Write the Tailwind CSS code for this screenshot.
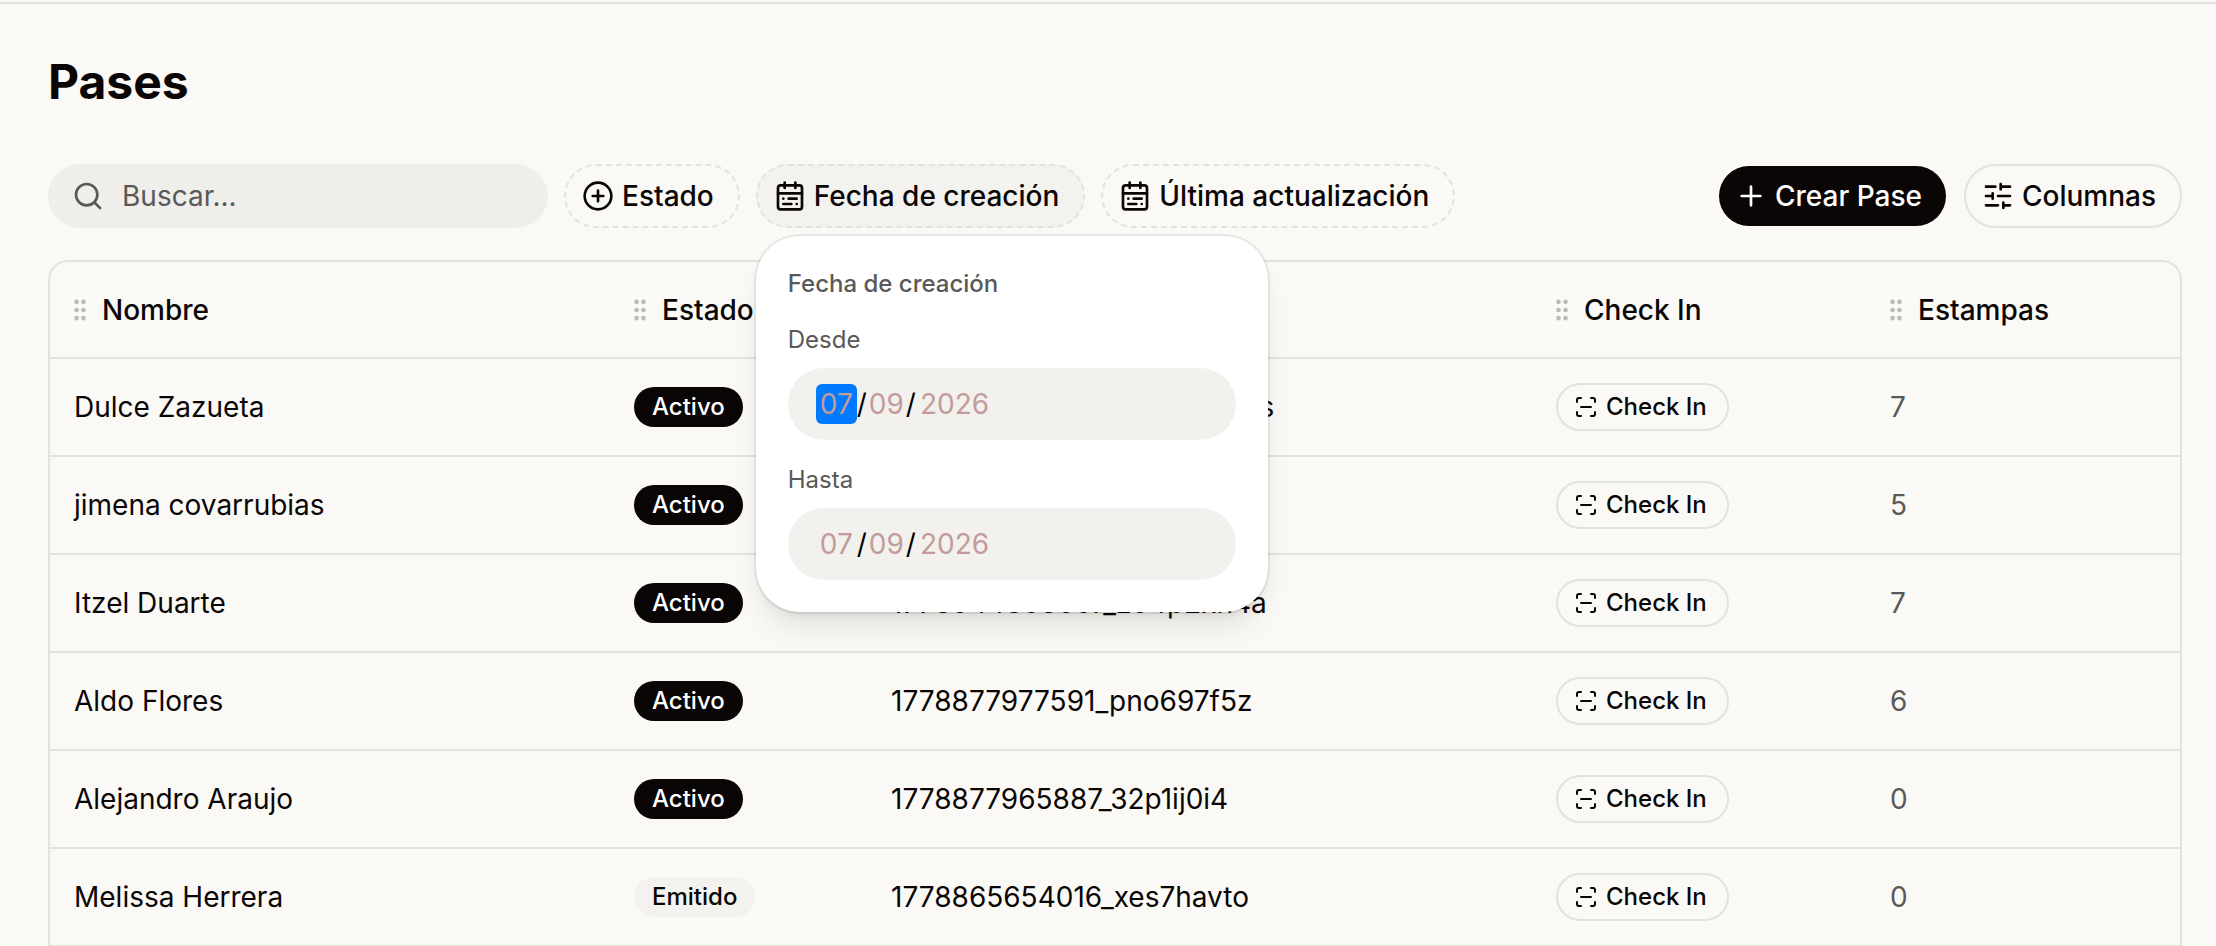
<!DOCTYPE html>
<html lang="en">
<head>
  <meta charset="UTF-8">
  <title>Pases</title>
  <script src="https://cdn.jsdelivr.net/npm/@tailwindcss/browser@4"></script>
</head>
<body class="bg-[#faf9f5] h-screen overflow-hidden font-[Inter,sans-serif] text-[28px] leading-10 text-[#0a0606]">
  <!-- Icons -->
  <svg class="hidden">
    <symbol id="search" viewBox="0 0 24 24"><circle cx="11" cy="11" r="8"/><path d="m21 21-4.3-4.3"/></symbol>
    <symbol id="plus" viewBox="0 0 24 24"><path d="M5 12h14M12 5v14"/></symbol>
    <symbol id="circle-plus" viewBox="0 0 24 24"><circle cx="12" cy="12" r="10"/><path d="M8 12h8M12 8v8"/></symbol>
    <symbol id="calendar" viewBox="0 0 24 24"><rect x="3" y="4" width="18" height="18" rx="2"/><path d="M16 2v4M3 10h18M8 2v4M17 14h-6M13 18H7M7 14h.01M17 18h.01"/></symbol>
    <symbol id="sliders" viewBox="0 0 24 24"><path d="M10 5H3M12 19H3M14 3v4M16 17v4M21 12h-9M21 19h-5M21 5h-7M8 10v4M8 12H3"/></symbol>
    <symbol id="scan" viewBox="0 0 24 24"><path d="M3 7V5a2 2 0 0 1 2-2h2M17 3h2a2 2 0 0 1 2 2v2M21 17v2a2 2 0 0 1-2 2h-2M7 21H5a2 2 0 0 1-2-2v-2M7 12h10"/></symbol>
    <symbol id="grip" viewBox="0 0 24 24"><circle cx="9" cy="5" r="1"/><circle cx="9" cy="12" r="1"/><circle cx="9" cy="19" r="1"/><circle cx="15" cy="5" r="1"/><circle cx="15" cy="12" r="1"/><circle cx="15" cy="19" r="1"/></symbol>
  </svg>

  <div class="h-1 border-b-2 border-[#e3e2de]"></div>

  <main class="pl-12 pr-[34px] pt-[54px]">
    <h1 class="text-5xl leading-12 font-bold">Pases</h1>

    <!-- Toolbar -->
    <div class="mt-[58px] flex items-center gap-4 font-medium">
      <label class="flex h-16 w-[500px] items-center gap-[18px] rounded-full bg-[#efeeea] px-6 text-[#595959]">
        <svg class="size-8 shrink-0 fill-none stroke-current stroke-2" stroke-linecap="round" stroke-linejoin="round"><use href="#search"/></svg>
        <input type="search" aria-label="Buscar" placeholder="Buscar..." class="min-w-0 flex-1 font-normal outline-none placeholder:text-[#595959]">
      </label>
      <button class="flex h-16 items-center gap-2 rounded-full border-2 border-dashed border-[#e3e2de] pl-4 pr-6">
        <svg class="size-8 fill-none stroke-current stroke-2" stroke-linecap="round" stroke-linejoin="round"><use href="#circle-plus"/></svg>
        Estado
      </button>
      <div class="relative">
        <button class="flex h-16 items-center gap-2 rounded-full border-2 border-dashed border-[#e3e2de] bg-[#f3f2ee] pl-4 pr-6">
          <svg class="size-8 fill-none stroke-current stroke-2" stroke-linecap="round" stroke-linejoin="round"><use href="#calendar"/></svg>
          Fecha de creación
        </button>

        <!-- Date filter popover -->
        <div class="absolute left-0 top-full z-10 mt-2 w-[512px] rounded-[44px] bg-white p-8 text-2xl leading-8 text-[#595959] ring-2 ring-black/7 shadow-[0_20px_30px_-6px_rgba(0,0,0,0.1),0_8px_12px_-8px_rgba(0,0,0,0.1)]">
          <p>Fecha de creación</p>
          <label for="desde" class="mt-6 block font-normal">Desde</label>
          <input id="desde" type="date" value="2026-07-09" class="mt-3 block h-18 w-full rounded-full bg-[#f2f1ed] px-7 text-[28px] leading-10 font-normal text-black outline-none [&::-webkit-calendar-picker-indicator]:hidden [&::-webkit-datetime-edit]:leading-10 [&::-webkit-datetime-edit-month-field]:rounded-md [&::-webkit-datetime-edit-month-field]:bg-[#007aff] [&::-webkit-datetime-edit-month-field]:px-1 [&::-webkit-datetime-edit-month-field]:py-[3px] [&::-webkit-datetime-edit-month-field]:text-[#c29b9b] [&::-webkit-datetime-edit-day-field]:px-0.5 [&::-webkit-datetime-edit-day-field]:text-[#c29b9b] [&::-webkit-datetime-edit-year-field]:px-1 [&::-webkit-datetime-edit-year-field]:text-[#c29b9b]">
          <label for="hasta" class="mt-6 block font-normal">Hasta</label>
          <input id="hasta" type="date" value="2026-07-09" class="mt-3 block h-18 w-full rounded-full bg-[#f2f1ed] px-7 text-[28px] leading-10 font-normal text-black outline-none [&::-webkit-calendar-picker-indicator]:hidden [&::-webkit-datetime-edit]:leading-10 [&::-webkit-datetime-edit-month-field]:px-1 [&::-webkit-datetime-edit-month-field]:py-[3px] [&::-webkit-datetime-edit-month-field]:text-[#c29b9b] [&::-webkit-datetime-edit-day-field]:px-0.5 [&::-webkit-datetime-edit-day-field]:text-[#c29b9b] [&::-webkit-datetime-edit-year-field]:px-1 [&::-webkit-datetime-edit-year-field]:text-[#c29b9b]">
        </div>
      </div>
      <button class="flex h-16 items-center gap-2 rounded-full border-2 border-dashed border-[#e3e2de] pl-4 pr-6">
        <svg class="size-8 fill-none stroke-current stroke-2" stroke-linecap="round" stroke-linejoin="round"><use href="#calendar"/></svg>
        Última actualización
      </button>
      <div class="ml-auto flex items-center gap-[18px]">
        <button class="flex h-15 items-center gap-2 rounded-full bg-[#0a0606] pl-4 pr-6 text-white">
          <svg class="size-8 fill-none stroke-current stroke-2" stroke-linecap="round" stroke-linejoin="round"><use href="#plus"/></svg>
          Crear Pase
        </button>
        <button class="flex h-16 items-center gap-2 rounded-full border-2 border-[#e3e2de] pl-4 pr-6">
          <svg class="size-8 fill-none stroke-current stroke-2" stroke-linecap="round" stroke-linejoin="round"><use href="#sliders"/></svg>
          Columnas
        </button>
      </div>
    </div>

    <!-- Passes table -->
    <div class="mt-8 overflow-hidden rounded-t-[20px] border-2 border-b-0 border-[#e3e2de]">
      <table class="w-full table-fixed border-separate border-spacing-0 text-left">
        <colgroup>
          <col class="w-[560px]">
          <col class="w-[257px]">
          <col class="w-[665px]">
          <col class="w-[334px]">
          <col>
        </colgroup>
        <thead><tr id="columns"></tr></thead>
        <tbody id="passes"></tbody>
      </table>
    </div>
  </main>

  <script>
    const columns = ['Nombre', 'Estado', 'ID', 'Check In', 'Estampas'];

    const passes = [
      { name: 'Dulce Zazueta', status: 'Activo', id: '1778944526083_h7kc2wn9s', stamps: 7 },
      { name: 'jimena covarrubias', status: 'Activo', id: '1778942217350_r5tb8c1e', stamps: 5 },
      { name: 'Itzel Duarte', status: 'Activo', id: '1778944308097_z94p2xh4a', stamps: 7 },
      { name: 'Aldo Flores', status: 'Activo', id: '1778877977591_pno697f5z', stamps: 6 },
      { name: 'Alejandro Araujo', status: 'Activo', id: '1778877965887_32p1ij0i4', stamps: 0 },
      { name: 'Melissa Herrera', status: 'Emitido', id: '1778865654016_xes7havto', stamps: 0 },
    ];

    document.getElementById('columns').innerHTML = columns.map(title => `
      <th class="h-[97px] border-b-2 border-[#e3e2de] pl-4 font-medium">
        <div class="flex items-center gap-2">
          <svg class="size-7 fill-none stroke-[#bbbab7] stroke-2"><use href="#grip"/></svg>
          ${title}
        </div>
      </th>`).join('');

    document.getElementById('passes').innerHTML = passes.map(pass => {
      const badge = pass.status === 'Activo'
        ? '<span class="flex h-10 w-fit items-center rounded-full bg-[#0a0606] px-[18px] text-2xl font-medium text-white">Activo</span>'
        : '<span class="flex h-10 w-fit items-center rounded-full bg-[#f3f2ee] px-[18px] text-2xl font-medium">Emitido</span>';

      return `
        <tr>
          <td class="h-[98px] border-b-2 border-[#e3e2de] px-6">${pass.name}</td>
          <td class="border-b-2 border-[#e3e2de] px-6">${badge}</td>
          <td class="border-b-2 border-[#e3e2de] px-6">${pass.id}</td>
          <td class="border-b-2 border-[#e3e2de] px-6">
            <button class="flex h-12 items-center gap-2 rounded-full border-2 border-[#e3e2de] pl-4 pr-5 text-2xl font-medium">
              <svg class="size-6 fill-none stroke-current stroke-2" stroke-linecap="round" stroke-linejoin="round"><use href="#scan"/></svg>
              Check In
            </button>
          </td>
          <td class="border-b-2 border-[#e3e2de] px-6 text-[#595959]">${pass.stamps}</td>
        </tr>`;
    }).join('');
  </script>
</body>
</html>
